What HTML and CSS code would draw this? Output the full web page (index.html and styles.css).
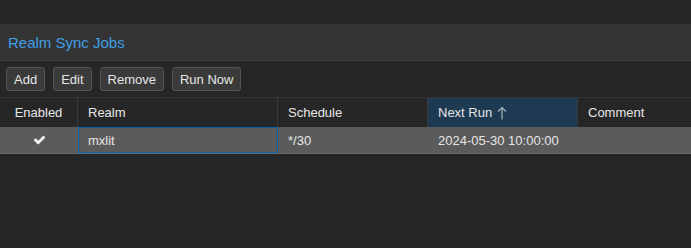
FILE: index.html
```html
<!DOCTYPE html>
<html lang="en">
<head>
  <meta charset="UTF-8" />
  <title>Realm Sync Jobs</title>
  <link rel="stylesheet" href="styles.css">
</head>
<body>
  <div class="topbar"></div>

  <section class="panel">
    <header class="panel-header">Realm Sync Jobs</header>

    <div class="toolbar">
      <button class="btn">Add</button>
      <button class="btn">Edit</button>
      <button class="btn">Remove</button>
      <button class="btn">Run Now</button>
    </div>

    <div class="grid">
      <div class="grid-head">
        <div class="col center">Enabled</div>
        <div class="col">Realm</div>
        <div class="col">Schedule</div>
        <div class="col sorted">Next Run
          <svg class="sort-arrow" width="10" height="14" viewBox="0 0 10 14">
            <path d="M5 1.5V13.5M1 5.5L5 1.5L9 5.5" fill="none" stroke="#a9b4bd" stroke-width="1.2"/>
          </svg>
        </div>
        <div class="col">Comment</div>
      </div>

      <div class="grid-row selected">
        <div class="cell center">
          <svg width="13" height="10" viewBox="0 370 1792 1100">
            <path fill="#f2f2f2" d="M1671 566q0 40-28 68l-724 724-136 136q-28 28-68 28t-68-28l-136-136-362-362q-28-28-28-68t28-68l136-136q28-28 68-28t68 28l294 295 656-657q28-28 68-28t68 28l136 136q28 28 28 68z"/>
          </svg>
        </div>
        <div class="cell focused">mxlit</div>
        <div class="cell">*/30</div>
        <div class="cell">2024-05-30 10:00:00</div>
        <div class="cell"></div>
      </div>
    </div>
  </section>
</body>
</html>
```

FILE: styles.css
```css
:root {
  --bg: #262626;
  --panel-head: #343434;
  --line: #3c3c3c;
  --text: #e6e6e6;
  --title: #3f9fe6;
  --btn-bg: #3a3a3a;
  --btn-border: #545454;
  --row-sel: #5b5b5b;
  --sorted: #1d3a52;
  --focus: #0a62a8;
}
* {
  margin: 0;
  padding: 0;
  box-sizing: border-box;
}
body {
  background: var(--bg);
  color: var(--text);
  font-family: 'Liberation Sans', Arial, sans-serif;
  font-size: 13px;
}
.topbar {
  height: 24px;
  background: #252525;
}
.panel-header {
  height: 37px;
  padding: 0 8px;
  display: flex;
  align-items: center;
  background: var(--panel-head);
  border-bottom: 1px solid #3f3f3f;
  color: var(--title);
  font-size: 15px;
}
.toolbar {
  height: 36px;
  display: flex;
  align-items: center;
  gap: 8px;
  padding: 0 6px;
}
.btn {
  height: 24px;
  padding: 0 7px;
  background: var(--btn-bg);
  border: 1px solid var(--btn-border);
  border-radius: 3px;
  color: var(--text);
  font-family: inherit;
  font-size: 13px;
}
.grid-head,
.grid-row {
  display: grid;
  grid-template-columns: 78px 200px 150px 150px 1fr;
}
.grid-head {
  height: 30px;
  border-top: 1px solid #333;
}
.col {
  display: flex;
  align-items: center;
  gap: 5px;
  padding: 0 10px;
  border-right: 1px solid var(--line);
}
.col:last-child {
  border-right: none;
}
.col.sorted {
  background: var(--sorted);
}
.sort-arrow {
  margin-top: 1px;
}
.center {
  justify-content: center;
  padding: 0;
}
.grid-row {
  height: 27px;
  border-bottom: 1px solid #6a6a6a;
}
.grid-row.selected {
  background: var(--row-sel);
}
.cell {
  display: flex;
  align-items: center;
  padding: 0 10px;
}
.cell.center {
  padding: 0;
}
.cell.focused {
  border: 1px solid var(--focus);
  padding-left: 9px;
}
```
